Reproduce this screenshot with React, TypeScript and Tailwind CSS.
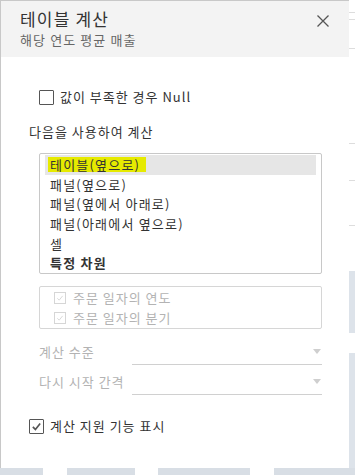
const font = { fontFamily: '"Noto Sans CJK KR", "Noto Sans", sans-serif' };

function Check({ checked, disabled }: { checked?: boolean; disabled?: boolean }) {
  return (
    <span
      className={
        disabled
          ? "flex h-[12px] w-[12px] shrink-0 items-center justify-center border border-[#d6d6d6] bg-white"
          : "flex h-[15px] w-[15px] shrink-0 items-center justify-center rounded-[1px] border border-[#555] bg-white"
      }
    >
      {checked && (
        <svg viewBox="0 0 12 12" className={disabled ? "h-[8px] w-[8px]" : "h-[11px] w-[11px]"}>
          <path
            d="M2 6.5 L4.8 9.2 L10 2.8"
            fill="none"
            stroke={disabled ? "#cfcfcf" : "#555"}
            strokeWidth={disabled ? 1.2 : 1.8}
          />
        </svg>
      )}
    </span>
  );
}

function Caret() {
  return (
    <svg viewBox="0 0 8 5" className="h-[5px] w-[8px]">
      <path d="M0 0 H8 L4 5 Z" fill="#cfcfcf" />
    </svg>
  );
}

const items = ["패널(옆으로)", "패널(옆에서 아래로)", "패널(아래에서 옆으로)", "셀"];

export default function App() {
  return (
    <div className="flex h-[475px] w-[355px] flex-col overflow-hidden bg-white" style={font}>
      <div className="flex h-[468px]">
        <div className="flex h-[468px] w-[349px] flex-col border-l border-t border-[#c8c8c8] bg-white shadow-[2px_2px_2px_rgba(0,0,0,0.25)]">
          <div className="flex h-[56px] justify-between bg-[#f3f3f3] pl-[19px] pr-[20px]">
            <div className="pt-[6px]">
              <div className="text-[17px] leading-[23px] tracking-[1.2px] text-[#333]">테이블 계산</div>
              <div className="mt-[1px] text-[13px] leading-[17px] tracking-[1.1px] text-[#666]">해당 연도 평균 매출</div>
            </div>
            <svg viewBox="0 0 12 12" className="mt-[14px] h-[12px] w-[12px]">
              <path d="M0.5 0.5 L11.5 11.5 M11.5 0.5 L0.5 11.5" stroke="#555" strokeWidth="1.3" />
            </svg>
          </div>

          <div className="flex flex-1 flex-col pl-[28px] pr-[27px] text-[13px] tracking-[1px] text-[#333]">
            <div className="mt-[32px] flex h-[16px] items-center gap-[6px] pl-[10px]">
              <Check />
              <span className="leading-[16px]">값이 부족한 경우 Null</span>
            </div>
            <div className="mt-[18px] leading-[18px]">다음을 사용하여 계산</div>

            <div className="mt-[12px] ml-[10px] flex h-[121px] flex-col rounded-[2px] border border-[#c8c8c8] px-[5px] pt-[1px] tracking-[1.2px]">
              <div className="flex h-[20px] items-center bg-[#e6e6e6] pl-[3px]">
                <span className="bg-[#e6ea00] pl-[2px] pr-[6px] leading-[15px]">테이블(옆으로)</span>
              </div>
              {items.map((t) => (
                <div key={t} className="flex h-[20px] items-center pl-[5px]">
                  {t}
                </div>
              ))}
              <div className="flex h-[20px] items-center pl-[5px] font-bold">특정 차원</div>
            </div>

            <div className="mt-[12px] ml-[10px] flex h-[43px] flex-col justify-center rounded-[2px] border border-[#d6d6d6] pl-[14px] text-[#b3b3b3]">
              {["주문 일자의 연도", "주문 일자의 분기"].map((t) => (
                <div key={t} className="flex h-[20px] items-center gap-[7px]">
                  <Check checked disabled />
                  <span>{t}</span>
                </div>
              ))}
            </div>

            <div className="mt-[12px] ml-[10px] flex h-[24px] items-end text-[#b3b3b3]">
              <span className="w-[93px] pb-[4px]">계산 수준</span>
              <div className="flex h-[24px] flex-1 items-start justify-end border-b border-[#d0d0d0] pt-[8px] pr-[1px]">
                <Caret />
              </div>
            </div>
            <div className="mt-[6px] ml-[10px] flex h-[24px] items-end text-[#b3b3b3]">
              <span className="w-[93px] whitespace-nowrap pb-[4px]">다시 시작 간격</span>
              <div className="flex h-[24px] flex-1 items-start justify-end border-b border-[#d0d0d0] pt-[8px] pr-[1px]">
                <Caret />
              </div>
            </div>

            <div className="mt-[23px] flex h-[16px] items-center gap-[6px]">
              <Check checked />
              <span className="leading-[16px]">계산 지원 기능 표시</span>
            </div>
          </div>
        </div>

        <div className="flex flex-1 flex-col bg-white">
          <div className="mt-[12px] h-px bg-[#ddd]" />
          <div className="mt-[6px] h-px bg-[#ddd]" />
          <div className="mt-[28px] h-px bg-[#ddd]" />
          <div className="mt-[94px] h-px bg-[#ddd]" />
          <div className="mt-[36px] h-px bg-[#ddd]" />
          <div className="mt-[44px] h-px bg-[#ddd]" />
          <div className="mt-[45px] h-[62px] bg-[#dde3ea]" />
          <div className="mt-[20px] flex-1 bg-[#dde3ea]" />
        </div>
      </div>
      <div className="flex h-[7px]">
        <div className="w-[43px] bg-[#d8dee5]" />
        <div className="w-[24px] bg-white" />
        <div className="w-[68px] bg-[#d8dee5]" />
        <div className="w-[23px] bg-white" />
        <div className="w-[92px] bg-[#d8dee5]" />
        <div className="w-[24px] bg-white" />
        <div className="flex-1 bg-[#d8dee5]" />
      </div>
    </div>
  );
}
